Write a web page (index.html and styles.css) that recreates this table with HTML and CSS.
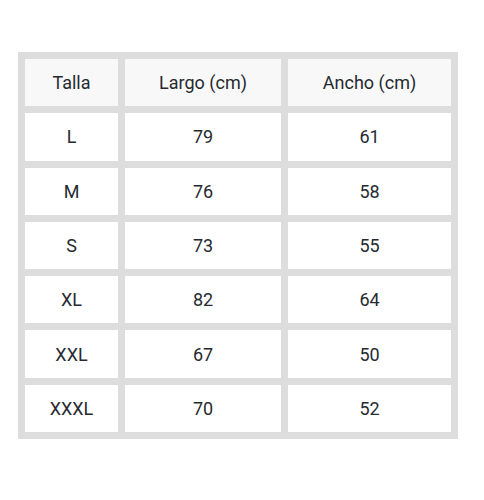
FILE: index.html
```html
<!DOCTYPE html>
<html lang="es">
<head>
<meta charset="utf-8">
<link rel="stylesheet" href="styles.css">
</head>
<body>
<div class="size-table">
  <div class="cell head">Talla</div>
  <div class="cell head">Largo (cm)</div>
  <div class="cell head">Ancho (cm)</div>
  <div class="cell">L</div><div class="cell">79</div><div class="cell">61</div>
  <div class="cell">M</div><div class="cell">76</div><div class="cell">58</div>
  <div class="cell">S</div><div class="cell">73</div><div class="cell">55</div>
  <div class="cell">XL</div><div class="cell">82</div><div class="cell">64</div>
  <div class="cell">XXL</div><div class="cell">67</div><div class="cell">50</div>
  <div class="cell">XXXL</div><div class="cell">70</div><div class="cell">52</div>
</div>
</body>
</html>
```
FILE: styles.css
```css
html, body {
  margin: 0;
  padding: 0;
  background: #ffffff;
}
body {
  padding: 52px 0 0 18px;
  font-family: Roboto, "Liberation Sans", Arial, sans-serif;
}
.size-table {
  display: grid;
  grid-template-columns: 93px 156px 163px;
  grid-template-rows: repeat(7, 1fr);
  gap: 7px;
  padding: 7px;
  width: 426px;
  height: 373px;
  background: #dddddd;
}
.cell {
  display: flex;
  align-items: center;
  justify-content: center;
  background: #ffffff;
  color: #262a30;
  font-size: 18px;
}
.cell.head {
  background: #f8f8f8;
}
```
